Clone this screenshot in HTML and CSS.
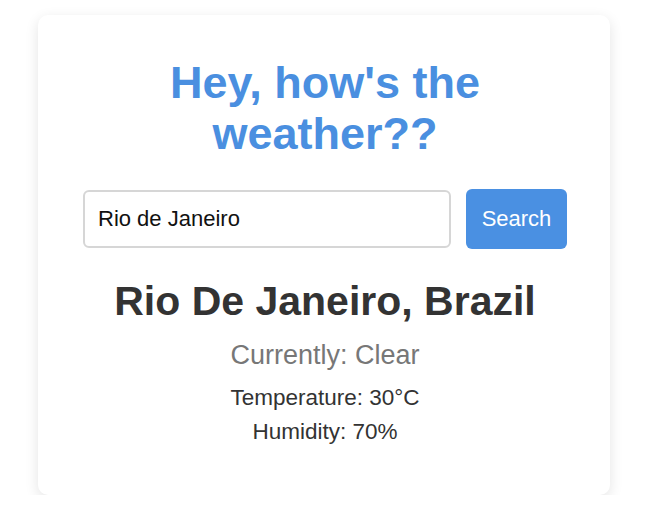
FILE: index.html
```html
<!DOCTYPE html>
<html>
<head>
<meta charset="utf-8">
<link rel="stylesheet" href="styles.css">
</head>
<body>
<main class="card">
  <h1 class="title">Hey, how's the<br>weather??</h1>
  <form class="search">
    <input class="search-input" type="text" value="Rio de Janeiro">
    <button class="search-btn" type="button">Search</button>
  </form>
  <section class="result">
    <h2 class="city">Rio De Janeiro, Brazil</h2>
    <p class="condition">Currently: Clear</p>
    <p class="detail">Temperature: 30°C</p>
    <p class="detail">Humidity: 70%</p>
  </section>
</main>
</body>
</html>
```

FILE: styles.css
```css
html, body {
  margin: 0;
  background: #ffffff;
}
body {
  padding: 15px 0 0 38px;
  font-family: "Liberation Sans", Arial, sans-serif;
}
.card {
  box-sizing: border-box;
  width: 572px;
  height: 480px;
  background: #fff;
  border-radius: 10px;
  box-shadow: 0 4px 14px rgba(0, 0, 0, 0.11);
  padding: 42px 43px 0 45px;
  display: flex;
  flex-direction: column;
  align-items: center;
}
.title {
  margin: 0;
  font-size: 45px;
  line-height: 51px;
  font-weight: bold;
  color: #4a8fe0;
  text-align: center;
}
.search {
  margin: 30px 0 0;
  display: flex;
  align-items: center;
  gap: 15px;
  align-self: stretch;
}
.search-input {
  box-sizing: border-box;
  width: 368px;
  height: 58px;
  border: 2px solid #d6d6d6;
  border-radius: 6px;
  padding: 0 13px;
  font-family: inherit;
  font-size: 22px;
  color: #111;
  outline: none;
}
.search-btn {
  box-sizing: border-box;
  width: 101px;
  height: 60px;
  border: none;
  border-radius: 6px;
  background: #4a90e2;
  color: #fff;
  font-family: inherit;
  font-size: 22px;
  padding: 0;
}
.result {
  margin-top: 29px;
  display: flex;
  flex-direction: column;
  align-items: center;
}
.city {
  margin: 0;
  font-size: 41px;
  line-height: 47px;
  font-weight: bold;
  color: #333;
}
.condition {
  margin: 15px 0 0;
  font-size: 27px;
  line-height: 31px;
  color: #777;
}
.condition + .detail {
  margin-top: 10px;
}
.detail {
  margin: 0;
  font-size: 22.5px;
  line-height: 34px;
  color: #333;
}
```
